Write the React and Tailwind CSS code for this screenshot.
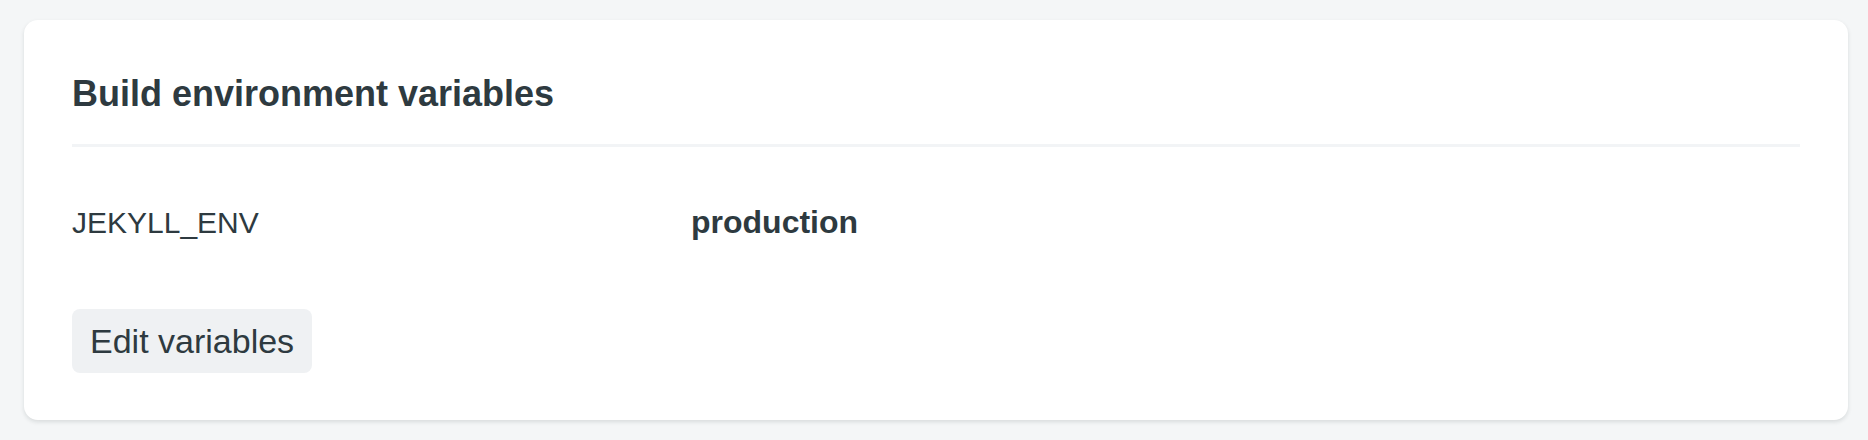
import React from "react";

const font = { fontFamily: '"Liberation Sans", Arial, sans-serif' };

const variables = [{ key: "JEKYLL_ENV", value: "production" }];

export default function App() {
  return (
    <div className="min-h-[440px] w-full bg-[#f4f6f7] pt-5 pl-6 pr-5" style={font}>
      <div className="rounded-[14px] bg-white px-12 pt-[50px] pb-[47px] text-[#2e3a40] shadow-[0_2px_4px_rgba(14,30,37,0.12)]">
        <h2 className="text-[36px] font-bold leading-[48px]">Build environment variables</h2>
        <div className="mt-[26px] h-[3px] bg-[#f2f4f6]" />
        <div className="mt-[51px]">
          {variables.map((v) => (
            <div key={v.key} className="flex items-baseline text-[30px] leading-[48px]">
              <span className="w-[619px]">{v.key}</span>
              <span className="text-[32px] font-bold">{v.value}</span>
            </div>
          ))}
        </div>
        <button className="mt-[62px] flex h-16 items-center rounded-[8px] bg-[#eff1f3] px-[18px] text-[34px] font-medium leading-none text-[#2e3a40]">
          Edit variables
        </button>
      </div>
    </div>
  );
}
